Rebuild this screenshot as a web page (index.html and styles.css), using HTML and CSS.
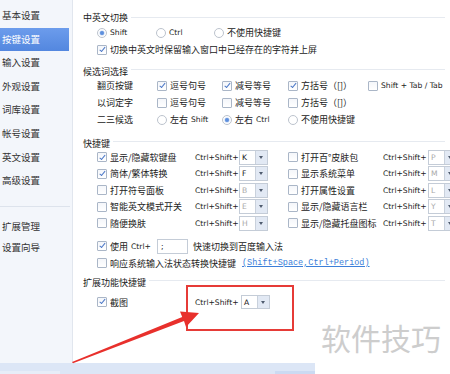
FILE: index.html
```html
<!DOCTYPE html>
<html lang="zh-CN">
<head>
<meta charset="utf-8">
<title>按键设置</title>
<link rel="stylesheet" href="styles.css">
</head>
<body>
<div class="app">
  <div class="main">
    <nav class="sidebar">
      <div class="nav-item">基本设置</div>
      <div class="nav-item active">按键设置</div>
      <div class="nav-item">输入设置</div>
      <div class="nav-item">外观设置</div>
      <div class="nav-item">词库设置</div>
      <div class="nav-item">帐号设置</div>
      <div class="nav-item">英文设置</div>
      <div class="nav-item">高级设置</div>
      <div class="nav-sep"></div>
      <div class="nav-item sm">扩展管理</div>
      <div class="nav-item sm">设置向导</div>
    </nav>
    <section class="content">
      <div class="hd h-first"><span>中英文切换</span></div>
      <div class="row r17 indent">
        <label class="opt w59"><i class="rd on"></i><span class="lat">Shift</span></label>
        <label class="opt w58"><i class="rd"></i><span class="lat">Ctrl</span></label>
        <label class="opt"><i class="rd"></i>不使用快捷键</label>
      </div>
      <div class="row r17 indent">
        <label class="opt"><i class="cb on"></i>切换中英文时保留输入窗口中已经存在的字符并上屏</label>
      </div>

      <div class="hd h-cand"><span>候选词选择</span></div>
      <div class="row r17 indent">
        <span class="lbl">翻页按键</span>
        <label class="opt o1"><i class="cb on"></i>逗号句号</label>
        <label class="opt o2"><i class="cb on"></i>减号等号</label>
        <label class="opt o3"><i class="cb on"></i>方括号（[]）</label>
        <label class="opt"><i class="cb"></i><span class="lat">Shift + Tab / Tab</span></label>
      </div>
      <div class="row r17 indent">
        <span class="lbl">以词定字</span>
        <label class="opt o1"><i class="cb"></i>逗号句号</label>
        <label class="opt o2"><i class="cb"></i>减号等号</label>
        <label class="opt o3"><i class="cb"></i>方括号（[]）</label>
      </div>
      <div class="row r17 indent">
        <span class="lbl">二三候选</span>
        <label class="opt o1"><i class="rd"></i>左右<span class="lat">Shift</span></label>
        <label class="opt o2"><i class="rd on"></i>左右<span class="lat">Ctrl</span></label>
        <label class="opt o3"><i class="rd"></i>不使用快捷键</label>
      </div>

      <div class="hd h-keys"><span>快捷键</span></div>
      <div class="row sc indent">
        <label class="opt c1"><i class="cb on"></i>显示/隐藏软键盘</label>
        <span class="lat ck">Ctrl+Shift+</span>
        <span class="dd"><b>K</b><i></i></span>
        <label class="opt c2"><i class="cb"></i>打开百°皮肤包</label>
        <span class="lat ck ck2">Ctrl+Shift+</span>
        <span class="dd off"><b>P</b><i></i></span>
      </div>
      <div class="row sc indent">
        <label class="opt c1"><i class="cb on"></i>简体/繁体转换</label>
        <span class="lat ck">Ctrl+Shift+</span>
        <span class="dd"><b>F</b><i></i></span>
        <label class="opt c2"><i class="cb"></i>显示系统菜单</label>
        <span class="lat ck ck2">Ctrl+Shift+</span>
        <span class="dd off"><b>M</b><i></i></span>
      </div>
      <div class="row sc indent">
        <label class="opt c1"><i class="cb"></i>打开符号面板</label>
        <span class="lat ck">Ctrl+Shift+</span>
        <span class="dd off"><b>B</b><i></i></span>
        <label class="opt c2"><i class="cb"></i>打开属性设置</label>
        <span class="lat ck ck2">Ctrl+Shift+</span>
        <span class="dd off"><b>L</b><i></i></span>
      </div>
      <div class="row sc indent">
        <label class="opt c1"><i class="cb"></i>智能英文模式开关</label>
        <span class="lat ck">Ctrl+Shift+</span>
        <span class="dd off"><b>E</b><i></i></span>
        <label class="opt c2"><i class="cb"></i>显示/隐藏语言栏</label>
        <span class="lat ck ck2">Ctrl+Shift+</span>
        <span class="dd off"><b>Y</b><i></i></span>
      </div>
      <div class="row sc indent">
        <label class="opt c1"><i class="cb"></i>随便换肤</label>
        <span class="lat ck">Ctrl+Shift+</span>
        <span class="dd off"><b>H</b><i></i></span>
        <label class="opt c2"><i class="cb"></i>显示/隐藏托盘图标</label>
        <span class="lat ck ck2">Ctrl+Shift+</span>
        <span class="dd off"><b>T</b><i></i></span>
      </div>

      <div class="row r17 indent gap-top">
        <label class="opt u1"><i class="cb on"></i>使用 <span class="lat">Ctrl+</span></label>
        <span class="inp">;</span>
        <span class="after-inp">快速切换到百度输入法</span>
      </div>
      <div class="row r17 indent">
        <label class="opt"><i class="cb"></i>响应系统输入法状态转换快捷键</label>
        <a class="link">(Shift+Space,Ctrl+Period)</a>
      </div>

      <div class="hd h-ext"><span>扩展功能快捷键</span></div>
      <div class="row r20 indent ext">
        <label class="opt c1"><i class="cb on"></i>截图</label>
        <span class="lat ck ck3">Ctrl+Shift+</span>
        <span class="dd"><b>A</b><i></i></span>
      </div>
    </section>
  </div>
  <div class="bottombar">
    <span class="seg s1"></span><span class="seg s2"></span><span class="seg s3"></span>
  </div>
</div>

<div class="callout"></div>
<svg class="arrow" width="450" height="374" viewBox="0 0 450 374">
  <polygon points="72,362 182.2,317 180,311.5 199,313 186,327 184,321 73,363.2" fill="#e8302c"/>
</svg>
<div class="watermark">软件技巧</div>
</body>
</html>
```

FILE: styles.css
```css
html, body {
  margin: 0;
  padding: 0;
}
body {
  width: 450px;
  height: 374px;
  overflow: hidden;
  background: #ffffff;
  font-family: "Noto Sans CJK SC", sans-serif;
  font-size: 9px;
  color: #222222;
  position: relative;
}

.app {
  display: flex;
  flex-direction: column;
  height: 374px;
}
.main {
  display: flex;
  height: 363px;
}

/* sidebar */
.sidebar {
  width: 72px;
  flex-shrink: 0;
  background: #f3f6fb;
  border-right: 1px solid #e1e6ee;
  padding-top: 4px;
}
.nav-item {
  height: 23.6px;
  line-height: 23.6px;
  padding-left: 2px;
  margin-right: 3px;
  font-size: 9.5px;
  color: #333333;
  white-space: nowrap;
}
.nav-item.active {
  background: linear-gradient(#6c9cec, #5387df);
  color: #ffffff;
}
.nav-item.sm {
  height: 21px;
  line-height: 21px;
}
.nav-sep {
  height: 1px;
  background: #dde3ec;
  margin: 13px 2px 9px 0;
}

/* content */
.content {
  flex: 1;
  padding: 10px 5px 0 10px;
  display: flex;
  flex-direction: column;
  min-width: 0;
}
.hd {
  display: flex;
  align-items: center;
  gap: 3px;
  height: 12px;
  color: #1a1a1a;
  white-space: nowrap;
}
.hd::after {
  content: "";
  flex: 1;
  height: 1px;
  background: #e6eaf0;
  margin-top: -3px;
}
.h-first { height: 14px; }
.h-first::after { margin-top: 0; }
.h-cand { margin-top: 7px; }
.h-keys { margin-top: 9px; }
.h-ext { margin-top: 4.5px; }

.row {
  display: flex;
  align-items: center;
  white-space: nowrap;
}
.row > * { flex-shrink: 0; }
.r17 { height: 17px; }
.r20 { height: 20px; margin-top: 4px; }
.sc { height: 16.5px; }
.gap-top { margin-top: 6px; }
.indent { padding-left: 14px; }

.lat {
  font-family: "DejaVu Sans", sans-serif;
  font-size: 7.6px;
}

.opt {
  display: flex;
  align-items: center;
  gap: 3px;
}
.w59 { width: 59px; }
.w58 { width: 58px; }
.lbl { width: 60px; }
.o1 { width: 65px; }
.o2 { width: 66px; }
.o3 { width: 80px; }
.c1 { width: 98px; }
.c2 { width: 95px; margin-left: 20px; }
.ck { width: 44px; }
.ck2 { width: 45px; }
.ck3 { width: 46px; }
.u1 { width: 60px; }

/* checkbox */
.cb {
  display: inline-block;
  width: 10px;
  height: 10px;
  box-sizing: border-box;
  border: 1px solid #aab6c7;
  border-radius: 1px;
  background: linear-gradient(#f4f6fa, #ffffff);
  position: relative;
  flex-shrink: 0;
}
.cb.on::after {
  content: "";
  position: absolute;
  left: 2.6px;
  top: 0.4px;
  width: 2.4px;
  height: 4.6px;
  border: solid #4b78c7;
  border-width: 0 1.3px 1.3px 0;
  transform: rotate(40deg);
}

/* radio */
.rd {
  display: inline-block;
  width: 10px;
  height: 10px;
  box-sizing: border-box;
  border: 1px solid #bcc3cd;
  border-radius: 50%;
  background: #ffffff;
  position: relative;
  flex-shrink: 0;
}
.rd.on::after {
  content: "";
  position: absolute;
  inset: 2px;
  border-radius: 50%;
  background: #5d8fdd;
  box-shadow: 0 0 1px 0.5px #b6ccef;
}

/* dropdown */
.dd {
  display: flex;
  width: 29px;
  height: 15px;
  box-sizing: border-box;
  border: 1px solid #c4ccd7;
  background: #ffffff;
}
.dd b {
  flex: 1;
  font-weight: normal;
  font-family: "DejaVu Sans", sans-serif;
  font-size: 7.6px;
  line-height: 13px;
  padding-left: 2px;
  color: #111111;
}
.dd.off b { color: #a8a8a8; }
.dd i {
  width: 11px;
  border-left: 1px solid #c9d1dc;
  background: #e2e9f4;
  position: relative;
}
.dd i::after {
  content: "";
  position: absolute;
  left: 3px;
  top: 5px;
  border-left: 2.5px solid transparent;
  border-right: 2.5px solid transparent;
  border-top: 3px solid #4f5b6e;
}
.ext .dd { height: 14px; }

/* input */
.inp {
  width: 31px;
  height: 15px;
  box-sizing: border-box;
  border: 1px solid #c4ccd7;
  padding-left: 3px;
  font-family: "DejaVu Sans", sans-serif;
  font-size: 7.6px;
  line-height: 13px;
}
.after-inp { margin-left: 5px; }

.link {
  margin-left: 6px;
  font-family: "Liberation Mono", monospace;
  font-size: 8.5px;
  color: #3c7fd9;
  text-decoration: underline;
}

/* bottom bar */
.bottombar {
  width: 315px;
  height: 11px;
  background: #dce6f6;
  display: flex;
  align-items: flex-end;
}
.seg { height: 3px; }
.s1 { width: 60px; background: #e7edf8; }
.s2 { width: 215px; background: #dce6f6; }
.s3 { width: 40px; background: #cbdaf2; }

/* annotation overlays */
.callout {
  position: absolute;
  left: 186px;
  top: 285px;
  width: 108px;
  height: 46px;
  box-sizing: border-box;
  border: 2px solid #e63b37;
}
.arrow {
  position: absolute;
  left: 0;
  top: 0;
  pointer-events: none;
}
.watermark {
  position: absolute;
  left: 321px;
  top: 322px;
  font-size: 30px;
  line-height: 30px;
  color: #cdcdcd;
  white-space: nowrap;
}
```
